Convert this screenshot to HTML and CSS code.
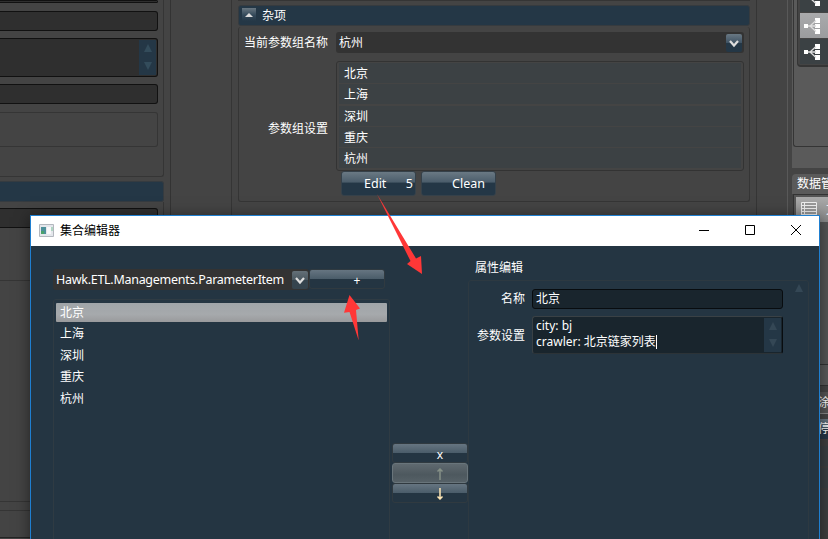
FILE: index.html
```html
<!DOCTYPE html>
<html lang="zh-CN">
<head>
<meta charset="utf-8">
<title>集合编辑器</title>
<link rel="stylesheet" href="styles.css">
</head>
<body>
<main class="app">
  <section class="left">
    <div class="left-panel">
      <div class="field stub"></div>
      <div class="field"></div>
      <div class="field area"><span class="scroll"><i class="up"></i><i class="down"></i></span></div>
      <div class="field"></div>
      <div class="group-box"></div>
    </div>
    <div class="left-header"></div>
    <div class="left-next"><div class="field low"></div></div>
    <div class="left-blank"></div>
    <div class="left-strip"></div>
    <div class="left-end"></div>
  </section>
  <section class="center">
    <div class="prev"></div>
    <header class="section-head"><span class="collapse"><i class="up light"></i></span>杂项</header>
    <div class="section-body">
      <div class="row">
        <label>当前参数组名称</label>
        <div class="combo">杭州<span class="drop"><svg viewBox="0 0 16 18"><path d="M4 7 8 11.500 12 7"/></svg></span></div>
      </div>
      <div class="row settings">
        <label>参数组设置</label>
        <ul class="list"><li>北京</li><li>上海</li><li>深圳</li><li>重庆</li><li>杭州</li></ul>
      </div>
      <div class="actions">
        <button class="btn edit"><span>Edit</span><span>5</span></button>
        <button class="btn clean">Clean</button>
      </div>
    </div>
  </section>
  <aside class="right">
    <div class="tools-pane">
      <div class="tools-frame">
        <div class="tools">
          <div class="tool cut"><svg class="tree" viewBox="0 0 16 16"><use href="#tree"/></svg></div>
          <div class="tool on"><svg class="tree" viewBox="0 0 16 16"><use href="#tree"/></svg></div>
          <div class="tool"><svg class="tree" viewBox="0 0 16 16"><use href="#tree"/></svg></div>
        </div>
      </div>
    </div>
    <div class="data-head">数据管</div>
    <div class="data-tools"><div class="data-tab">
      <svg width="16" height="16" viewBox="0 0 16 16"><path d="M.5.500h15v15H.500zM3.500 1v15M1 3.500h15M1 6.500h15M1 9.500h15M1 12.500h15" fill="#999" stroke="#eee"/></svg><span>文</span>
    </div></div>
    <div class="data-body"></div>
    <div class="peek-head">涂</div>
    <div class="peek-btn">停</div>
    <div class="stripes"><div></div><div></div><div></div></div>
  </aside>
</main>

<svg class="defs" aria-hidden="true"><defs><g id="tree">
  <path d="M0 6h4v4H0zM11 0h5v5h-5zM11 6h5v4h-5zM11 11h5v5h-5z" fill="#fff"/>
  <path d="M4 8h8M6 8l6-5.500M6 8l6 5.500" fill="none" stroke="#ddd" stroke-width="1.300"/>
</g></defs></svg>

<section class="dialog">
  <header class="titlebar">
    <svg class="app-icon" width="15" height="13" viewBox="0 0 15 13"><path d="M.5.500h14v12H.500z" fill="#e4e7ec" stroke="#b3b7be"/><path d="M2 3h5v7H2z" fill="#4c8f99"/><path d="M2 7h3v3H2z" fill="#4aa26b"/><path d="M8 3h4v7H8z" fill="#f8f8fa"/><path d="M12 3h2v4h-2z" fill="#afd5c2"/></svg>
    <h1>集合编辑器</h1>
    <div class="win">
      <svg viewBox="0 0 12 12"><path d="M1 6.500h10"/></svg>
      <svg viewBox="0 0 12 12"><path d="M1.500 1.500h9v9h-9z"/></svg>
      <svg viewBox="0 0 12 12"><path d="m1 1 10 10M11 1 1 11"/></svg>
    </div>
  </header>
  <div class="dialog-body">
    <div class="collection">
      <div class="type-row">
        <div class="type-combo"><span class="type-name">Hawk.ETL.Managements.ParameterItem</span><span class="drop gray"><svg viewBox="0 0 16 18"><path d="M4 7 8 11.500 12 7"/></svg></span></div>
        <button class="slim add">+</button>
      </div>
      <ul class="items"><li class="selected">北京</li><li>上海</li><li>深圳</li><li>重庆</li><li>杭州</li></ul>
    </div>
    <div class="order">
      <button class="slim">x</button>
      <button class="slim disabled"><svg viewBox="0 0 8 12"><path d="M4 1v11M1.500 3.500 4 1l2.500 2.500"/></svg></button>
      <button class="slim"><svg class="bright" viewBox="0 0 8 12"><path d="M4 0v11M1.500 8.500 4 11l2.500-2.500"/></svg></button>
    </div>
    <div class="props">
      <h2>属性编辑</h2>
      <div class="props-frame">
        <div class="props-form">
          <label>名称</label><div class="input">北京</div>
          <label class="multi-label">参数设置</label>
          <div class="input multi"><div>city: bj<br>crawler: 北京链家列表<span class="caret"></span></div><span class="scroll"><i class="up"></i><i class="down"></i></span></div>
        </div>
        <div class="rail"><i class="up"></i></div>
      </div>
    </div>
  </div>
</section>

<svg class="arrows" viewBox="0 0 828 539"><path d="M377 194 416 258.500l5-2.500 1 18-15-10 3.500-3zM349.500 295 360 308.500l-4 1.500 2.700 30.500-9.200-28.500-5.500.700z" fill="#ff3737"/></svg>
</body>
</html>
```

FILE: styles.css
```css
* { box-sizing: border-box; }
body {
  margin: 0; width: 828px; height: 539px; overflow: hidden; position: relative;
  background: #444; color: #fff;
  font: 12px/16px "Noto Sans", "Noto Sans CJK SC", sans-serif;
}
ul { list-style: none; margin: 0; padding: 0; }
h1, h2 { margin: 0; font-size: 12px; font-weight: 400; }
button { font: inherit; color: inherit; margin: 0; padding: 0; }
svg { display: block; flex: none; }
.defs { position: absolute; width: 0; height: 0; }
.app { display: flex; height: 539px; }

.up, .down { display: block; width: 0; height: 0; border: 4px solid transparent; border-top: 0; border-bottom: 8px solid #334c5b; }
.down { border-bottom: 0; border-top: 8px solid #334c5b; }
.up.light { border-width: 0 4px 4px; border-bottom-color: #ddd; }
.scroll { width: 17px; background: #243746; display: flex; flex-direction: column; align-items: center; justify-content: space-between; padding: 4px 0 5px; }

.left { width: 171px; border-right: 1px solid #333; display: flex; flex-direction: column; }
.left-panel { width: 164px; height: 177px; border: solid #353535; border-width: 0 1px 1px 0; border-radius: 0 0 3px 0; padding-right: 5px; }
.field { height: 20px; background: #2f2f2f; border: 1px solid #111; border-left: 0; border-radius: 0 3px 3px 0; margin-bottom: 7px; }
.field.stub { height: 3px; margin-bottom: 8px; }
.field.area { height: 39px; display: flex; justify-content: flex-end; padding: 1px; }
.group-box { height: 35px; margin-top: 8px; border: 1px solid #353535; border-left: 0; border-radius: 0 3px 3px 0; }
.left-header { width: 164px; height: 21px; margin-top: 4px; background: #243746; border: 1px solid #353b40; border-left: 0; border-radius: 0 3px 3px 0; }
.left-next { width: 164px; height: 79px; padding: 6px 5px 0 0; border: solid #353535; border-width: 0 1px 1px 0; }
.left-blank { height: 221px; border-bottom: 1px solid #353535; }
.left-strip { height: 9px; border-bottom: 1px solid #353535; }
.left-end { height: 27px; border-bottom: 1px solid #242424; }

.center { width: 526px; margin-left: 60px; border: solid #353535; border-width: 0 1px; padding: 0 6px; }
.prev { height: 1px; margin-bottom: 4px; background: #353535; }
.section-head { height: 21px; display: flex; align-items: center; gap: 6px; padding-left: 3px; background: #243746; border: 1px solid #363b3f; border-radius: 3px; }
.collapse { width: 14px; height: 13px; margin-top: -2px; display: flex; align-items: center; justify-content: center; background: linear-gradient(#697781, #34495a 55%, #243746); padding-top: 1px; }
.section-body { height: 175px; margin-top: 1px; padding: 5px 5px 0 0; border: 1px solid #353535; border-top: 0; border-radius: 3px; }
.row { display: flex; align-items: center; }
.row label { width: 89px; text-align: right; margin-right: 8px; flex: none; }
.combo { flex: 1; height: 21px; background: #333; border-radius: 3px; padding: 0 2px 0 3px; display: flex; align-items: center; justify-content: space-between; }
.drop { width: 16px; height: 18px; border-radius: 2px; background: linear-gradient(#697883, #405465 48%, #243746 50%); }
.drop svg { width: 16px; height: 18px; }
.drop path { fill: none; stroke: #ddd; stroke-width: 2.2; }
.drop.gray { background: linear-gradient(#647078, #4c5961 48%, #35444e 50%); }
.settings { margin-top: 8px; align-items: stretch; }
.settings label { padding-top: 60px; }
.list { flex: 1; height: 110px; border: 1px solid #333; border-radius: 3px; padding: 1px 2px; }
.list li { height: 20px; margin-bottom: 1.3px; padding: 3px 5px 1px; background: #3c4144; }
.actions { display: flex; gap: 5px; padding-left: 102px; }
.btn { width: 75px; height: 25px; border: 1px solid #35414a; border-radius: 3px; background: linear-gradient(#6a7984, #4b5d6b 44%, #243746 48%); font-size: 12.5px; }
.edit { display: flex; justify-content: space-between; align-items: center; padding: 0 2px 0 22px; }
.clean { padding-left: 20px; }

.right { width: 41px; margin-left: 30px; border-left: 1px solid #595959; padding-left: 4px; display: flex; flex-direction: column; }
.tools-pane { height: 168px; background: #5a5a5a; }
.tools-frame { height: 147px; margin-left: 1px; border: solid #353535; border-width: 0 0 1px 1px; border-radius: 0 0 0 3px; padding-left: 3px; }
.tools { height: 67px; background: #444; border: solid #353535; border-width: 0 0 2px 1px; border-radius: 0 0 0 4px; padding-left: 2px; }
.tool { height: 25px; margin-bottom: 1px; padding: 5px 5px 5px 4px; background: #3b4144; }
.tool.cut { height: 12px; padding-top: 0; overflow: hidden; display: flex; align-items: flex-end; padding-bottom: 6px; }
.tool.on { background: linear-gradient(#a9aaac, #9b9c9e); }
.tree { width: 16px; height: 16px; }
.data-head { height: 20px; margin-top: 6px; padding: 2px 0 0 5px; background: #5a5a5a; border-radius: 4px 0 0 0; white-space: nowrap; overflow: hidden; }
.data-tools { height: 28px; padding: 2px 0 0 2px; border: solid #333; border-width: 1px 0 0 1px; margin-left: 1px; background: #555; }
.data-tab { display: flex; gap: 9px; height: 25px; padding: 5px 0 0 5px; background: linear-gradient(#aaa, #888); overflow: hidden; }
.data-body { height: 164px; border-bottom: 1px solid #333; background: linear-gradient(#555 0 142px, #333 142px 143px, #5a5a5a 143px); }
.peek-head { height: 22px; margin-top: 6px; padding: 3px 0 0 26px; background: #555; border-bottom: 1px solid #888; white-space: nowrap; overflow: hidden; }
.peek-btn { height: 20px; margin-top: 5px; padding: 2px 0 0 26px; background: linear-gradient(#697883, #405465 48%, #243746 50%); white-space: nowrap; overflow: hidden; }
.stripes { flex: 1; padding-top: 7px; background: #3f3f3f; }
.stripes div { height: 20px; margin-bottom: 2px; background: #3a3f42; }

.dialog { position: absolute; left: 30px; top: 215px; width: 790px; height: 340px; background: #243542; border: 1px solid #1f7fd0; box-shadow: 0 2px 14px rgba(0,0,0,.5); display: flex; flex-direction: column; }
.titlebar { height: 30px; flex: none; background: #fff; color: #000; display: flex; align-items: center; padding: 0 17px 2px 8px; }
.titlebar h1 { margin: 2px 0 0 6px; }
.win { margin-left: auto; display: flex; gap: 34px; }
.win svg { width: 12px; height: 12px; }
.win path { fill: none; stroke: #000; }
.dialog-body { flex: 1; display: flex; padding-left: 22px; }
.collection { width: 337px; padding-top: 23px; display: flex; flex-direction: column; }
.type-row { display: flex; height: 21px; }
.type-combo { width: 256px; flex: none; height: 21px; background: #333; border-radius: 3px; padding: 0 1px 0 3px; display: flex; align-items: center; justify-content: space-between; }
.type-name { font-size: 12.5px; letter-spacing: -.28px; white-space: nowrap; }
.slim { width: 76px; height: 20px; padding: 2px 0 0 20px; line-height: 15px; border: 1px solid #303a40; border-radius: 3px; background: linear-gradient(#667581, #4b5d6a 48%, #243542 50%); }
.items { flex: 1; margin-top: 9px; padding: 3px 2px; border: 1px solid #2f3b43; border-radius: 3px; }
.items li { height: 20px; margin-bottom: 1.4px; padding: 2px 4px; }
.items .selected { height: 19px; margin-bottom: 2.4px; background: linear-gradient(#a0a5a9, #a6a9ac 60%, #999a9c); border-radius: 1px; }
.order { width: 78px; padding: 197px 0 0 2px; }
.order .slim { display: flex; align-items: center; justify-content: center; }
.order .disabled { background: linear-gradient(#5f696f, #4d585e 60%, #566167); border-color: #69757b; }
.order svg { width: 8px; height: 12px; }
.order path { fill: none; stroke: #859087; stroke-width: 1.5; }
.order .bright path { stroke: #ffe7b5; }
.props { flex: 1; padding-top: 14px; display: flex; flex-direction: column; }
.props h2 { padding-left: 7px; height: 20px; }
.props-frame { flex: 1; width: 341px; display: flex; border: 1px solid #2d3941; border-radius: 3px; }
.props-form { width: 314px; display: grid; grid-template-columns: 56px 251px; grid-template-rows: 20px 38px; align-content: start; gap: 7px; padding-top: 8px; align-items: center; }
.props label { text-align: right; }
.props .multi-label { padding-top: 2px; }
.input { align-self: stretch; border: 1px solid #080c0f; border-radius: 3px; background: #19252d; padding: 1px 3px; }
.multi { border-color: #3a4145 #080c0f #2c3337 #3a4145; padding: 1px 1px 1px 3px; display: flex; justify-content: space-between; }
.caret { display: inline-block; width: 1px; height: 14px; background: #fff; vertical-align: -3px; }
.rail { width: 15px; margin-left: auto; padding: 3px 0 0 2px; }
.rail .up, .multi .up { border-bottom-color: #344755; }
.multi .down { border-top-color: #344755; }
.arrows { position: absolute; left: 0; top: 0; width: 828px; height: 539px; pointer-events: none; }
```
